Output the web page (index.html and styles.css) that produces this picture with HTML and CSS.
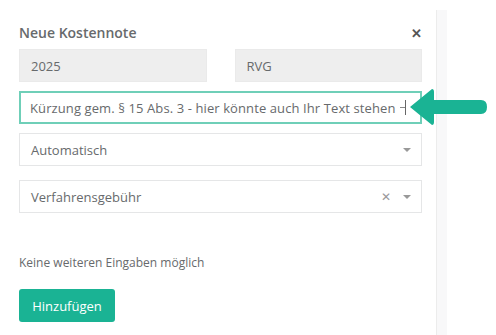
FILE: index.html
```html
<!DOCTYPE html>
<html lang="de">
<head>
    <meta charset="utf-8">
    <title>Neue Kostennote</title>
    <link rel="stylesheet" href="styles.css">
</head>
<body>
    <div class="panel">
        <div class="panel-head">
            <span class="title">Neue Kostennote</span>
            <span class="close">&#10005;</span>
        </div>
        <div class="row">
            <div class="field readonly">2025</div>
            <div class="field readonly">RVG</div>
        </div>
        <div class="text-input">Kürzung gem. § 15 Abs. 3 - hier könnte auch Ihr Text stehen <span class="cursor"></span></div>
        <div class="field select">
            <span>Automatisch</span>
            <span class="caret"></span>
        </div>
        <div class="field select">
            <span>Verfahrensgebühr</span>
            <span class="clear">&#10005;</span>
            <span class="caret"></span>
        </div>
        <p class="hint">Keine weiteren Eingaben möglich</p>
        <button class="add-button">Hinzufügen</button>

        <svg class="pointer" width="78" height="38" viewBox="0 0 78 38">
            <path d="M0 18 L22 0 Q24 0 24 3 L24 11 L71 11 Q77 11 77 18 Q77 25 71 25 L24 25 L24 33 Q24 36 22 36 Z" fill="#1ab394"/>
        </svg>
    </div>
    <div class="strip"></div>
</body>
</html>
```

FILE: styles.css
```css
body {
    margin: 0;
    font-family: "Open Sans", Arial, sans-serif;
    color: #676a6c;
    background-color: #ffffff;
    display: flex;
    height: 335px;
    overflow: hidden;
}
.panel {
    position: relative;
    width: 403px;
    padding: 23px 14px 0 19px;
    display: flex;
    flex-direction: column;
}
.panel-head {
    display: flex;
    justify-content: space-between;
    align-items: center;
    height: 19px;
    margin-bottom: 7px;
}
.title {
    font-size: 14px;
    font-weight: 600;
    color: #676a6c;
}
.close {
    font-size: 13px;
    font-weight: bold;
    color: #555;
}
.row {
    display: flex;
    gap: 28px;
    margin-bottom: 9px;
}
.row .field {
    flex: 1;
}
.field {
    box-sizing: border-box;
    height: 33px;
    border: 1px solid #e5e6e7;
    padding: 0 11px;
    font-size: 13px;
    display: flex;
    align-items: center;
    color: #676a6c;
    background-color: #ffffff;
}
.field.readonly {
    background-color: #eeeeee;
    border-color: #eaeaea;
}
.text-input {
    box-sizing: border-box;
    height: 33px;
    padding: 0 6px 0 11px;
    display: flex;
    align-items: center;
    font-size: 13px;
    letter-spacing: 0.1px;
    color: #676a6c;
    background-color: #ffffff;
    box-shadow: inset 0 0 0 2px #6fcfb8;
    margin-bottom: 9px;
}
.cursor {
    position: relative;
    display: inline-block;
    width: 1px;
    height: 15px;
    background-color: #666;
    margin-left: 9px;
}
.cursor::before {
    content: "";
    position: absolute;
    left: -5px;
    top: 7px;
    width: 5px;
    height: 1px;
    background-color: #888;
}
.field.select {
    margin-bottom: 14px;
    padding-right: 10px;
}
.select span:first-child {
    flex: 1;
}
.caret {
    width: 0;
    height: 0;
    border-left: 4px solid transparent;
    border-right: 4px solid transparent;
    border-top: 4px solid #999;
    margin-left: 12px;
}
.clear {
    color: #999;
    font-size: 12px;
}
.hint {
    font-size: 12px;
    line-height: 16px;
    margin: 28px 0 18px;
    color: #676a6c;
}
.add-button {
    align-self: flex-start;
    width: 96px;
    height: 33px;
    background-color: #1ab394;
    border: none;
    border-radius: 3px;
    color: #ffffff;
    font-family: "Open Sans", Arial, sans-serif;
    font-size: 13px;
}
.pointer {
    position: absolute;
    left: 410px;
    top: 89px;
}
.strip {
    width: 10px;
    margin-top: 10px;
    background-color: #f8f8f9;
    border-left: 1px solid #ececec;
}
```
